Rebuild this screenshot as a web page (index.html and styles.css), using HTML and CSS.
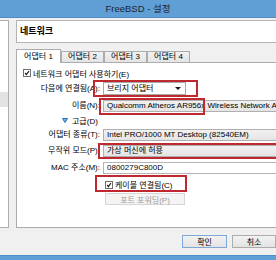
FILE: index.html
```html
<!DOCTYPE html>
<html lang="ko">
<head>
<meta charset="utf-8">
<title>FreeBSD - 설정</title>
<link rel="stylesheet" href="styles.css">
</head>
<body>
<div class="window">
  <div class="titlebar">FreeBSD - 설정</div>
  <div class="frame">
    <div class="content">
      <div class="sidebar">
        <ul class="sb-list">
          <li>일반</li>
          <li>시스템</li>
          <li>디스플레이</li>
          <li>저장소</li>
          <li>오디오</li>
          <li class="selected">네트워크</li>
          <li>직렬 포트</li>
          <li>USB</li>
          <li>공유 폴더</li>
        </ul>
      </div>
      <div class="main">
        <div class="page-title">네트워크</div>
        <div class="tabs">
          <div class="tab active">어댑터 1</div>
          <div class="tab">어댑터 2</div>
          <div class="tab">어댑터 3</div>
          <div class="tab">어댑터 4</div>
        </div>
        <div class="panel">
          <div class="form">
            <div class="check-row span2 first"><span class="cb"><svg viewBox="0 0 8 8"><polyline points="1.4,4 3.2,6 6.6,1.6"/></svg></span>네트워크 어댑터 사용하기(E)</div>
            <div class="lbl">다음에 연결됨(A):</div>
            <div class="combo white narrow">브리지 어댑터<span class="arrow"></span></div>
            <div class="lbl">이름(N):</div>
            <div class="combo">Qualcomm Atheros AR956x Wireless Network Adapter</div>
            <div class="adv span2"><svg viewBox="0 0 6 5"><polygon points="0.5,0.5 5.5,0.5 3,4.5"/></svg>고급(D)</div>
            <div class="lbl">어댑터 종류(T):</div>
            <div class="combo">Intel PRO/1000 MT Desktop (82540EM)</div>
            <div class="lbl">무작위 모드(P):</div>
            <div class="combo">가상 머신에 허용</div>
            <div class="lbl">MAC 주소(M):</div>
            <div class="input">0800279C800D</div>
            <div></div>
            <div class="check-row second"><span class="cb"><svg viewBox="0 0 8 8"><polyline points="1.4,4 3.2,6 6.6,1.6"/></svg></span>케이블 연결됨(C)</div>
            <div></div>
            <div class="btn-row"><span class="btn disabled">포트 포워딩(P)</span></div>
          </div>
        </div>
      </div>
    </div>
    <div class="footer">
      <span class="btn default">확인</span>
      <span class="btn cancel">취소</span>
    </div>
  </div>
  <div class="bottom-frame"></div>
  <div class="mark m1"></div>
  <div class="mark m2"></div>
  <div class="mark m3"></div>
  <div class="mark m4"></div>
</div>
</body>
</html>
```
FILE: styles.css
```css
html, body {
  margin: 0;
  padding: 0;
  width: 276px;
  height: 260px;
  overflow: hidden;
  background: #f0f0f0;
}
body {
  font-family: "Liberation Sans", "Noto Sans CJK KR", sans-serif;
  font-size: 8px;
  color: #000;
}
.window {
  position: relative;
  width: 276px;
  height: 260px;
  overflow: hidden;
}
.titlebar {
  height: 18px;
  box-sizing: border-box;
  background: #5f9fd6;
  border-bottom: 1px solid #4e8cc4;
  text-align: center;
  line-height: 17px;
  font-size: 9.5px;
  color: #1b2634;
}
.frame {
  height: 237px;
  background: #f0f0f0;
  display: flex;
  flex-direction: column;
}
.content {
  display: flex;
  padding-top: 2px;
  height: 208px;
}
.sidebar {
  width: 9px;
  height: 208px;
  box-sizing: border-box;
  background: #fff;
  border-top: 1px solid #adadad;
  border-right: 1px solid #adadad;
  border-bottom: 1px solid #adadad;
  overflow: hidden;
  flex: none;
}
.sb-list {
  list-style: none;
  margin: 0 0 0 -112px;
  padding: 12px 0 0 0;
  width: 120px;
}
.sb-list li {
  height: 12px;
  line-height: 12px;
  padding-left: 75px;
  white-space: nowrap;
}
.sb-list li.selected {
  height: 15px;
  line-height: 15px;
  margin-top: -1px;
  background: #e3e3e3;
}
.main {
  flex: 1;
  margin-left: 7px;
  margin-right: -12px;
  display: flex;
  flex-direction: column;
}
.page-title {
  height: 23px;
  box-sizing: border-box;
  border: 1px solid #b4b4b4;
  background: #fff;
  font-weight: bold;
  font-size: 9px;
  line-height: 21px;
  padding-left: 3px;
}
.tabs {
  height: 19px;
  display: flex;
  align-items: flex-end;
}
.tab {
  width: 43px;
  height: 11px;
  box-sizing: border-box;
  border: 1px solid #acacac;
  border-bottom: none;
  background: linear-gradient(#f2f2f2, #e4e4e4);
  text-align: center;
  line-height: 10px;
  white-space: nowrap;
}
.tab.active {
  width: 45px;
  height: 14px;
  margin-bottom: -1px;
  background: #fff;
  position: relative;
  z-index: 1;
  line-height: 13px;
}
.panel {
  height: 166px;
  box-sizing: border-box;
  border: 1px solid #acacac;
  background: #fff;
}
.form {
  display: grid;
  grid-template-columns: 83px 1fr;
  grid-template-rows: 14px 17px 17px 13px 16px 16px 17px 17px 12px;
  column-gap: 3px;
  padding-top: 3px;
}
.span2 {
  grid-column: 1 / 3;
}
.lbl {
  text-align: right;
  align-self: center;
  white-space: nowrap;
  line-height: 12px;
}
.check-row {
  display: flex;
  align-items: center;
  white-space: nowrap;
}
.check-row.first {
  padding-left: 6px;
}
.check-row.second {
  padding-left: 2px;
}
.cb {
  width: 8px;
  height: 8px;
  box-sizing: border-box;
  border: 1px solid #6f6f6f;
  background: #fff;
  margin-right: 2px;
  display: flex;
}
.cb svg {
  width: 6px;
  height: 6px;
}
.cb polyline {
  fill: none;
  stroke: #1a1a1a;
  stroke-width: 1.5;
}
.combo, .input {
  align-self: center;
  height: 12px;
  box-sizing: border-box;
  border: 1px solid #b0b0b0;
  background: linear-gradient(#f1f1f1, #e5e5e5);
  line-height: 10px;
  padding-left: 3px;
  white-space: nowrap;
  overflow: hidden;
  position: relative;
}
.combo.white {
  background: #fdfdfd;
  border-color: #a9a9a9;
}
.combo.narrow {
  width: 83px;
  height: 13px;
  line-height: 11px;
}
.input {
  background: #fff;
  border-color: #b5b5b5;
}
.arrow {
  position: absolute;
  right: 4px;
  top: 4px;
  width: 0;
  height: 0;
  border-left: 3px solid transparent;
  border-right: 3px solid transparent;
  border-top: 3px solid #1a1a1a;
}
.adv {
  display: flex;
  align-items: center;
  padding-left: 45px;
  white-space: nowrap;
}
.adv svg {
  width: 6px;
  height: 5px;
  margin-right: 4px;
}
.adv polygon {
  fill: #7fb2e0;
  stroke: #2d6fb0;
  stroke-width: 1;
}
.btn-row {
  padding-left: 2px;
  display: flex;
}
.btn {
  display: flex;
  align-items: center;
  justify-content: center;
  box-sizing: border-box;
  border: 1px solid #acacac;
  background: linear-gradient(#f2f2f2, #e3e3e3);
  white-space: nowrap;
}
.btn.disabled {
  width: 80px;
  height: 12px;
  border-color: #d6d6d6;
  background: #f4f4f4;
  color: #9d9d9d;
}
.footer {
  height: 27px;
  box-sizing: border-box;
  padding-top: 7px;
  display: flex;
  justify-content: flex-end;
  gap: 5px;
}
.footer .btn {
  height: 13px;
}
.btn.default {
  width: 45px;
  border-color: #7ea9d6;
}
.btn.cancel {
  width: 44px;
}
.bottom-frame {
  height: 5px;
  box-sizing: border-box;
  background: #5f9fd6;
  border-top: 1px solid #4e8cc4;
}
.mark {
  position: absolute;
  box-sizing: border-box;
  border: 2px solid #c0282f;
}
.m1 { left: 93px; top: 80px; width: 105px; height: 17px; }
.m2 { left: 99px; top: 98px; width: 106px; height: 17px; }
.m3 { left: 98px; top: 143px; width: 190px; height: 16px; }
.m4 { left: 95px; top: 175px; width: 92px; height: 17px; }
```
